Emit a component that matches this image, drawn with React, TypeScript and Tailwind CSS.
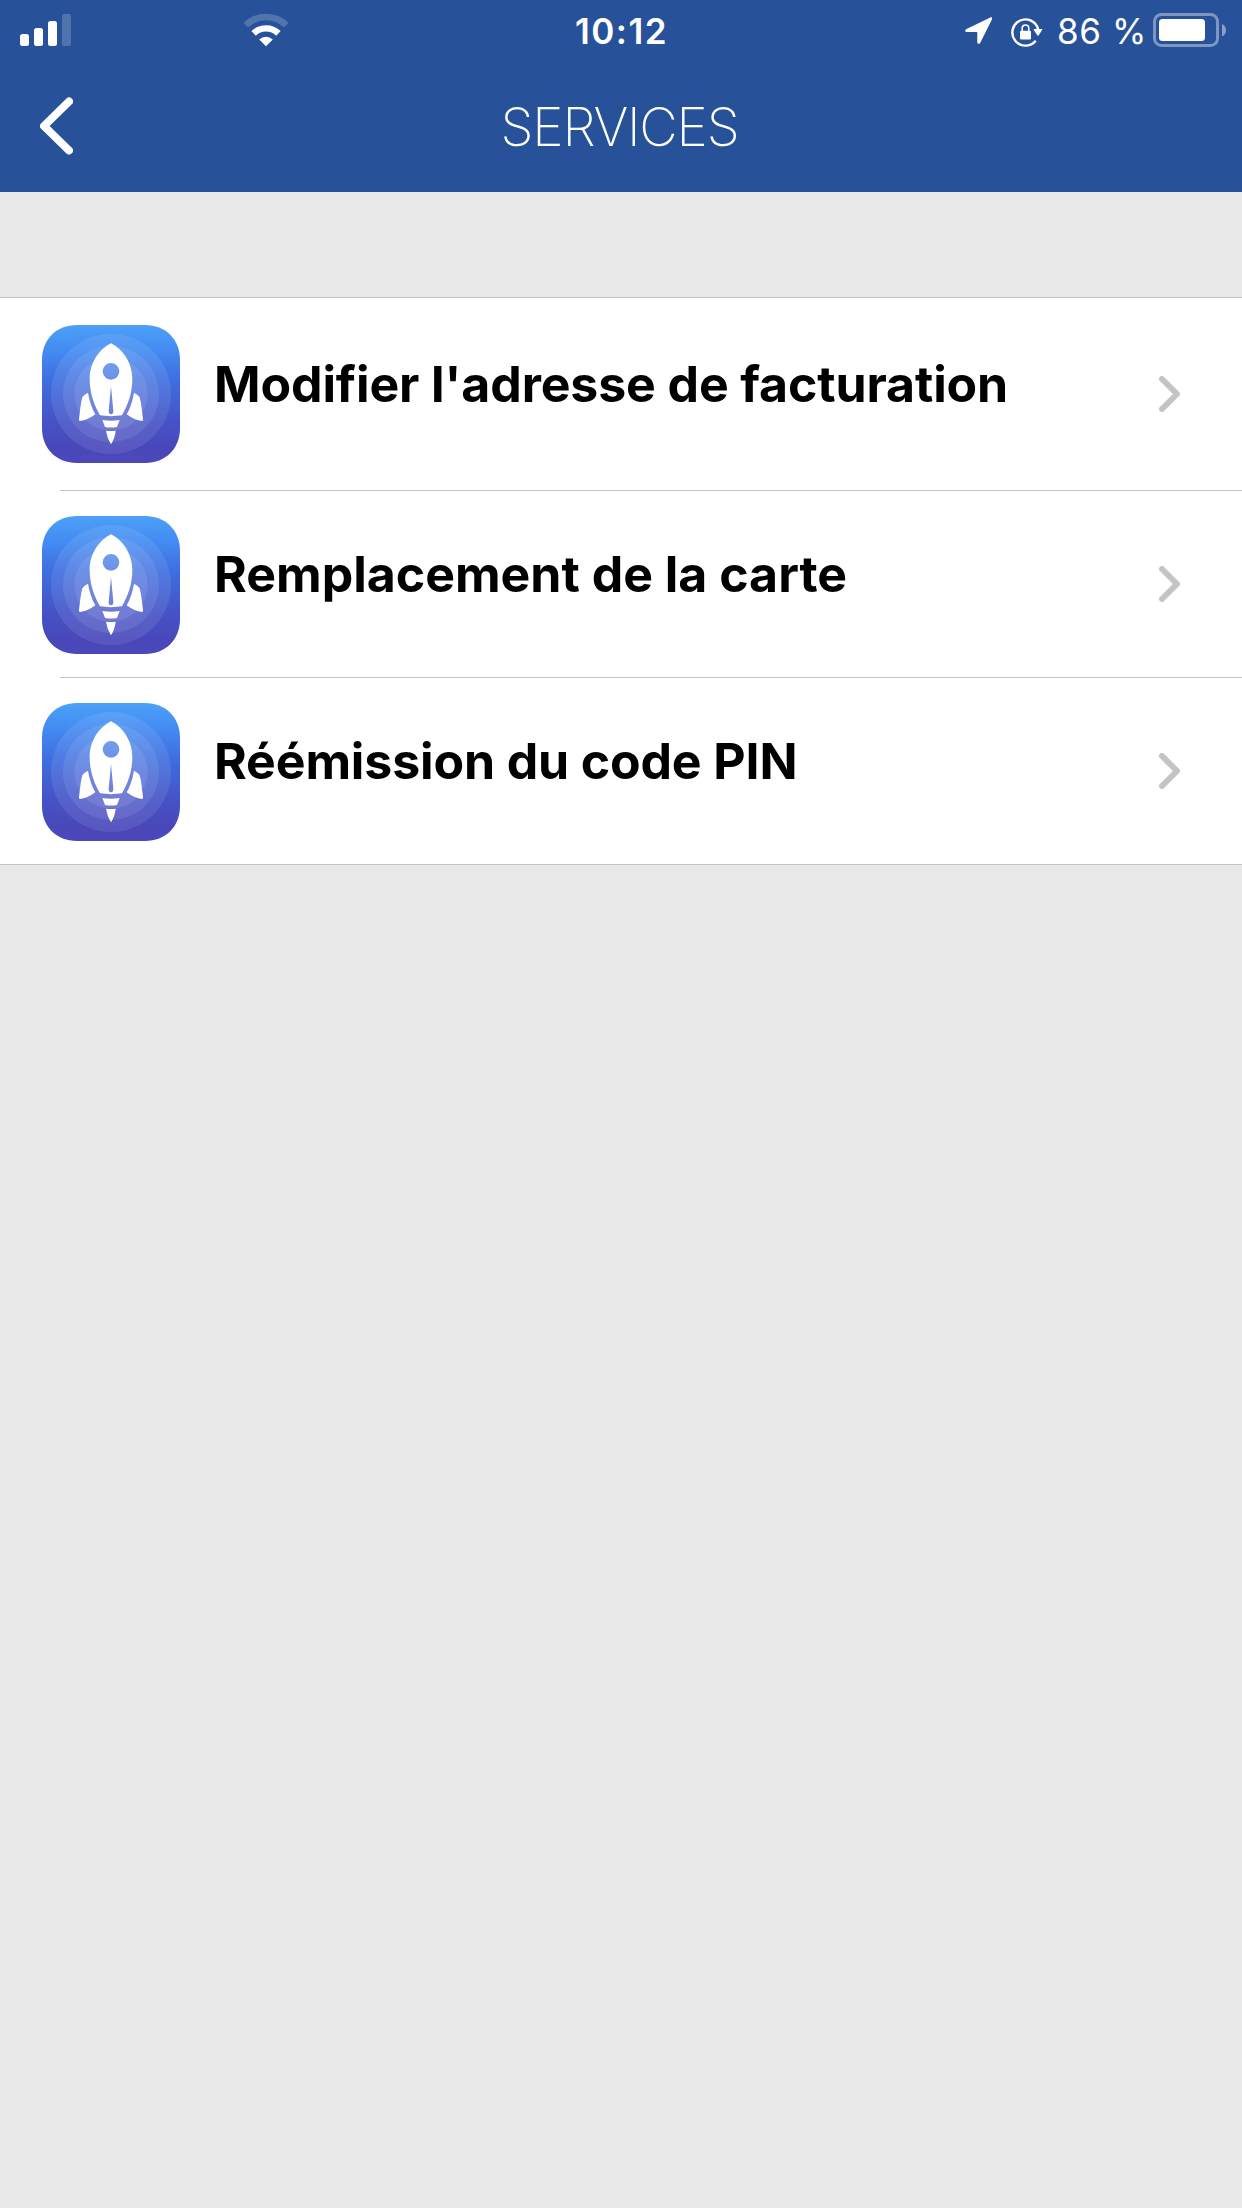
type Service = {
  label: string
  rowClass: string
  labelClass: string
  chevronClass: string
}

const services: Service[] = [
  {
    label: "Modifier l'adresse de facturation",
    rowClass: 'h-[192px] pt-[27px]',
    labelClass: 'mt-[29px] tracking-[-0.12px]',
    chevronClass: 'mt-[51px]',
  },
  {
    label: 'Remplacement de la carte',
    rowClass: 'h-[186px] pt-[25px]',
    labelClass: 'mt-[28px]',
    chevronClass: 'mt-[50px]',
  },
  {
    label: 'Réémission du code PIN',
    rowClass: 'h-[186px] pt-[25px]',
    labelClass: 'mt-[28px] tracking-[-0.14px]',
    chevronClass: 'mt-[50px]',
  },
]

function SignalIcon() {
  return (
    <svg viewBox="0 0 51 32" width="51" height="32" fill="#fff" aria-hidden="true">
      <rect x="0" y="20" width="9" height="12" rx="2.5" />
      <rect x="14" y="14" width="9" height="18" rx="2.5" />
      <rect x="28" y="7" width="9" height="25" rx="2.5" />
      <rect x="42" y="0" width="9" height="32" rx="2.5" opacity="0.2" />
    </svg>
  )
}

function WifiIcon() {
  return (
    <svg viewBox="0 0 46 34" width="46" height="34" fill="none" stroke="#fff" aria-hidden="true">
      <path d="M2.7 12.2a29.2 29.2 0 0 1 40.6 0" strokeWidth="6.6" opacity="0.2" />
      <path d="M10.6 20.4a17.8 17.8 0 0 1 24.8 0" strokeWidth="6.4" />
      <path d="M23 33.3l-6.8-6.8a9.8 9.8 0 0 1 13.6 0z" fill="#fff" stroke="none" />
    </svg>
  )
}

function LocationIcon() {
  return (
    <svg viewBox="0 0 28 27" width="28" height="27" fill="#fff" aria-hidden="true">
      <path d="M25.3.5 1.1 12.3c-1.5.8-1.1 2.6.5 2.6h10.2c.3 0 .5.2.5.5v10c0 1.6 2.2 2 2.9.5L27 2.2C27.5 1 26.5 0 25.3.5z" />
    </svg>
  )
}

function RotationLockIcon() {
  return (
    <svg viewBox="0 0 32 30" width="32" height="30" aria-hidden="true">
      <path d="M24.7 23.7A13.1 13.1 0 1 1 27.2 12.5" fill="none" stroke="#fff" strokeWidth="2.4" />
      <path d="M23.3 12h7.2c.6 0 .9.6.6 1.1l-3.6 5.3c-.3.4-.8.4-1.1 0l-3.6-5.3c-.3-.5-.1-1.1.5-1.1z" fill="#fff" />
      <rect x="9" y="13.7" width="11" height="8.7" rx="1.2" fill="#fff" />
      <path d="M11.2 14.5v-3.2a3.3 3.3 0 0 1 6.6 0v3.2" fill="none" stroke="#fff" strokeWidth="1.6" />
    </svg>
  )
}

function BatteryIcon() {
  return (
    <svg viewBox="0 0 74 34" width="74" height="34" fill="#fff" aria-hidden="true">
      <rect x="1.5" y="1.5" width="63" height="31" rx="7" fill="none" stroke="#fff" strokeWidth="3" opacity="0.4" />
      <rect x="6" y="6" width="46" height="22" rx="3.5" />
      <path d="M69 11c5.3 2 5.3 10.5 0 12.5z" opacity="0.45" />
    </svg>
  )
}

function RocketIcon() {
  return (
    <svg viewBox="0 0 414 414" width="138" height="138" className="shrink-0" aria-hidden="true">
      <defs>
        <linearGradient id="rocket-bg" x1="0" y1="0" x2="0" y2="1">
          <stop offset="0" stopColor="#4ba1f8" />
          <stop offset="0.2" stopColor="#4389f1" />
          <stop offset="0.4" stopColor="#3f6ee0" />
          <stop offset="0.7" stopColor="#4553c6" />
          <stop offset="0.9" stopColor="#4947b9" />
          <stop offset="1" stopColor="#4c48bb" />
        </linearGradient>
      </defs>
      <path
        d="M105 0H309C371 0 414 43 414 105V309C414 371 371 414 309 414H105C43 414 0 371 0 309V105C0 43 43 0 105 0z"
        fill="url(#rocket-bg)"
      />
      <g fill="#fff" fillOpacity="0.09">
        <circle cx="207" cy="207" r="180" />
        <circle cx="207" cy="207" r="144" />
        <circle cx="207" cy="207" r="110" />
      </g>
      <g fill="#fff">
        {/* fuselage, avec hublot et fente évidés */}
        <path
          fillRule="evenodd"
          d="M207 55C243 73 271 114 271 162C271 205 257 242 240 271Q207 276 174 271C157 242 143 205 143 162C143 114 171 73 207 55zM207 114a25 25 0 1 0 0 50a25 25 0 1 0 0-50zM207 183L200 258Q200 268 207 268Q214 268 214 258z"
        />
        <path d="M138 203Q144 240 160 268Q136 286 114 288Q110 288 111 283C114 258 116 235 121 217Q126 209 138 203z" />
        <path d="M276 203Q270 240 254 268Q278 286 300 288Q304 288 303 283C300 258 298 235 293 217Q288 209 276 203z" />
        <path d="M181 285Q207 289 233 285L225 306Q207 309 189 306z" />
        <path d="M192 317Q207 319 221 317Q219 339 207 358Q195 339 192 317z" />
      </g>
    </svg>
  )
}

function StatusBar() {
  return (
    <div className="grid h-[60px] grid-cols-[1fr_auto_1fr] items-center">
      <div className="flex items-center pl-5">
        <SignalIcon />
        <div className="ml-[172px]">
          <WifiIcon />
        </div>
      </div>
      <span className="pt-[2px] pl-px text-[35px] leading-none font-semibold tracking-[1.5px]">10:12</span>
      <div className="flex items-center justify-end pr-[15px]">
        <LocationIcon />
        <div className="ml-[18px] pt-[3px]">
          <RotationLockIcon />
        </div>
        <span className="ml-[14px] w-[96px] pt-[2px] text-[35px] leading-none tracking-[0.6px] whitespace-nowrap">
          86 %
        </span>
        <BatteryIcon />
      </div>
    </div>
  )
}

function NavBar() {
  return (
    <div className="grid h-[132px] grid-cols-[1fr_auto_1fr] items-center">
      <button type="button" aria-label="Retour" className="ml-10 w-[33px]">
        <svg
          viewBox="0 0 33 58"
          width="33"
          height="58"
          fill="none"
          stroke="#fff"
          strokeWidth="8"
          strokeLinecap="round"
          strokeLinejoin="round"
        >
          <path d="M29 4.5 4 29 29 53.5" />
        </svg>
      </button>
      <h1 className="pt-[2px] pr-[3px] text-[53px] leading-none font-extralight tracking-[-1.2px]">SERVICES</h1>
    </div>
  )
}

function ServiceRow({ label, rowClass, labelClass, chevronClass }: Service) {
  return (
    <a href="#" className={`flex items-start pr-[62px] pl-[42px] ${rowClass}`}>
      <RocketIcon />
      <span className={`ml-[34px] flex-1 text-[50px] leading-[60px] font-bold whitespace-nowrap text-black ${labelClass}`}>
        {label}
      </span>
      <svg
        viewBox="0 0 21 36"
        width="21"
        height="36"
        className={chevronClass}
        fill="none"
        stroke="#c4c4c6"
        strokeWidth="6"
        strokeLinecap="round"
        strokeLinejoin="round"
        aria-hidden="true"
      >
        <path d="M3 3l15 15L3 33" />
      </svg>
    </a>
  )
}

export default function App() {
  return (
    <main className="min-h-[2208px] w-[1242px] bg-[#e8e8e8] font-['Inter',sans-serif]">
      <header className="bg-[#275299] text-white">
        <StatusBar />
        <NavBar />
      </header>

      <ul className="mt-[105px] border-y border-[#c4c4c6] bg-white">
        {services.map((s, i) => (
          <li key={s.label}>
            {i > 0 && <div className="ml-[60px] h-px bg-[#c4c4c6]" />}
            <ServiceRow {...s} />
          </li>
        ))}
      </ul>
    </main>
  )
}
